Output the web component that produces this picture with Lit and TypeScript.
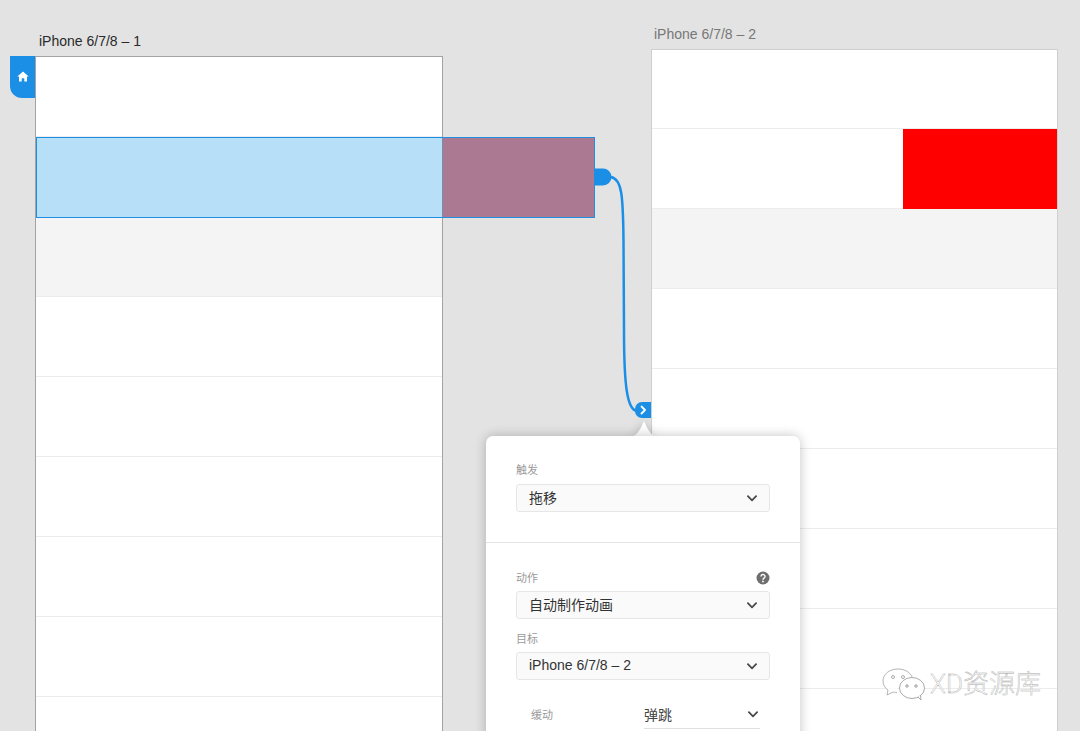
import { LitElement, html, css, svg } from "lit";
import { customElement } from "lit/decorators.js";

const chevron = html`<svg class="chev" width="10" height="7" viewBox="0 0 10 7"><path d="M.9 1.200 5 5.300l4.100-4.100" fill="none" stroke="#4a4a4a" stroke-width="1.800" stroke-linecap="round" stroke-linejoin="round"/></svg>`;

@customElement("app-root")
export class AppRoot extends LitElement {
  static styles = css`
    :host { display: block; width: 1080px; height: 731px; position: relative; overflow: hidden; background: #e3e3e3; font-family: "Liberation Sans", "Noto Sans CJK SC", sans-serif; }
    .title { position: absolute; font-size: 14px; line-height: 16px; white-space: nowrap; }
    .t1 { left: 39px; top: 33px; color: #2a2a2a; }
    .t2 { left: 654px; top: 26px; color: #777; }
    .board { position: absolute; box-sizing: border-box; background: #fff; display: flex; flex-direction: column; overflow: hidden; }
    .b1 { left: 35px; top: 56px; width: 408px; height: 690px; border: 1px solid #a3a3a3; }
    .b2 { left: 651px; top: 49px; width: 407px; height: 700px; border: 1px solid #cfcfcf; border-bottom: none; }
    .row { flex: none; height: 80px; box-sizing: border-box; border-bottom: 1px solid #ececec; display: flex; justify-content: flex-end; }
    .row.grey { background: #f4f4f4; }
    .b2 .first { height: 79px; }
    .b1 .first { height: 80px; }
    .red { width: 154px; background: #ff0000; height: 80px; }
    .sel { position: absolute; left: 36px; top: 137px; width: 559px; height: 81px; box-sizing: border-box; border: 1px solid #1d8fe4; display: flex; }
    .sel-a { width: 405px; background: #b7dff8; }
    .sel-b { flex: 1; background: #ab7a92; border-left: 1px solid #6f8fb5; }
    .home { position: absolute; left: 10px; top: 56px; width: 25px; height: 42px; background: #1b8fe6; border-bottom-left-radius: 12px; display: flex; align-items: center; justify-content: center; padding-bottom: 2px; padding-left: 1px; box-sizing: border-box; }
    .wires { position: absolute; left: 0; top: 0; }
    .panel { position: absolute; left: 486px; top: 436px; width: 314px; height: 320px; box-sizing: border-box; background: #fff; border-radius: 7px; box-shadow: 0 0 12px rgba(0,0,0,0.24); }
    .notch { position: absolute; left: 629px; top: 418px; filter: drop-shadow(0 0 5px rgba(0,0,0,0.18)); }
    .sec1 { height: 107px; box-sizing: border-box; padding: 27px 30px 0 30px; border-bottom: 1px solid #e4e4e4; }
    .sec2 { padding: 28px 30px 0 30px; }
    .label { font-size: 11px; line-height: 14px; color: #9a9a9a; display: flex; justify-content: space-between; align-items: center; height: 14px; }
    .select { box-sizing: border-box; height: 28px; margin-top: 7px; padding: 0 12px 2px 12px; background: #fafafa; border: 1px solid #e6e6e6; border-radius: 3px; display: flex; align-items: center; justify-content: space-between; font-size: 14px; color: #333; }
    .chev { margin-top: 2px; }
    .sec2 .select { margin-top: 6px; }
    .label.next { margin-top: 13px; }
    .ease { display: flex; align-items: center; margin-top: 20px; height: 28px; padding-left: 15px; }
    .ease .k { width: 113px; font-size: 11px; color: #9a9a9a; }
    .ease .v { flex: 1; display: flex; align-items: center; justify-content: space-between; font-size: 14px; color: #444; height: 29px; padding-right: 2px; border-bottom: 1px solid #e0e0e0; box-sizing: border-box; margin-right: 10px; }
    .mark { position: absolute; left: 881px; top: 666px; display: flex; align-items: center; gap: 3px; }
    .mark span { font-family: Roboto, "Noto Sans CJK SC", sans-serif; font-size: 26px; line-height: 32px; color: rgba(255,255,255,0.94); -webkit-text-stroke: 0.4px #a8a8a8; font-weight: 300; white-space: nowrap; }
  `;

  render() {
    const rows = (n: number) => Array.from({ length: n }, () => html`<div class="row"></div>`);
    return html`
      <div class="title t1">iPhone 6/7/8 – 1</div>
      <div class="title t2">iPhone 6/7/8 – 2</div>

      <div class="board b1">
        <div class="row first"></div>
        <div class="row"></div>
        <div class="row grey"></div>
        ${rows(6)}
      </div>
      <div class="board b2">
        <div class="row first"></div>
        <div class="row"><div class="red"></div></div>
        <div class="row grey"></div>
        ${rows(6)}
      </div>

      <div class="home">
        <svg width="12" height="11" viewBox="0 0 12 11"><path d="M6 .4 11.700 5.600H10V10.500H7.300V7.300H4.700V10.500H2V5.600H.3Z" fill="#fff"/></svg>
      </div>
      <div class="sel"><div class="sel-a"></div><div class="sel-b"></div></div>

      <svg class="wires" width="1080" height="731">
        ${svg`
          <path d="M595 168.500h8a8.500 8.500 0 0 1 0 17h-8Z" fill="#1b8fe6"/>
          <path d="M611 177C622 179 623 196 623.500 240L624 330C624 385 627 410 637 411" fill="none" stroke="#1b8fe6" stroke-width="2.500"/>
          <path d="M651 402h-9a7 7 0 0 0-7 7v2a7 7 0 0 0 7 7h9Z" fill="#1b8fe6"/>
          <path d="M641.500 406.500 645 410l-3.500 3.500" fill="none" stroke="#fff" stroke-width="1.800" stroke-linecap="round" stroke-linejoin="round"/>
        `}
      </svg>

      <svg class="notch" width="30" height="19" viewBox="0 0 30 19"><path d="M0 18.500C6 18.500 9 17 15 3 21 17 24 18.500 30 18.500V19H0Z" fill="#fff"/></svg>

      <div class="panel">
        <div class="sec1">
          <div class="label">触发</div>
          <div class="select"><span>拖移</span>${chevron}</div>
        </div>
        <div class="sec2">
          <div class="label">动作
            <svg width="14" height="14" viewBox="0 0 14 14"><circle cx="7" cy="7" r="6.500" fill="#6e6e6e"/><path d="M5 5.400a2 2 0 1 1 3 1.800c-.7.4-1 .7-1 1.500" fill="none" stroke="#fff" stroke-width="1.400"/><circle cx="7" cy="10.500" r=".9" fill="#fff"/></svg>
          </div>
          <div class="select"><span>自动制作动画</span>${chevron}</div>
          <div class="label next">目标</div>
          <div class="select"><span>iPhone 6/7/8 – 2</span>${chevron}</div>
          <div class="ease"><div class="k">缓动</div><div class="v"><span>弹跳</span>${chevron}</div></div>
        </div>
      </div>

      <div class="mark">
        <svg width="46" height="36" viewBox="0 0 46 36">
          <path d="M17 3C8 3 2 8.500 2 15c0 4 2 7 5 9l-1 5 6-3c1 .3 2 .4 4 .4" fill="rgba(255,255,255,.85)" stroke="#b4b4b4" stroke-width="1"/>
          <path d="M17 3c8 0 14 4.500 15 11" fill="none" stroke="#b4b4b4" stroke-width="1"/>
          <circle cx="12" cy="11" r="1.500" fill="none" stroke="#aaa"/><circle cx="22" cy="11" r="1.500" fill="none" stroke="#aaa"/>
          <ellipse cx="31" cy="22" rx="12.500" ry="10.500" fill="#fff" stroke="#aaa"/>
          <path d="M37 31l3 3-.6-5" fill="#fff" stroke="#aaa"/>
          <circle cx="26" cy="20" r="1.200" fill="none" stroke="#999"/><circle cx="35" cy="20" r="1.200" fill="none" stroke="#999"/>
        </svg>
        <span>XD资源库</span>
      </div>
    `;
  }
}
